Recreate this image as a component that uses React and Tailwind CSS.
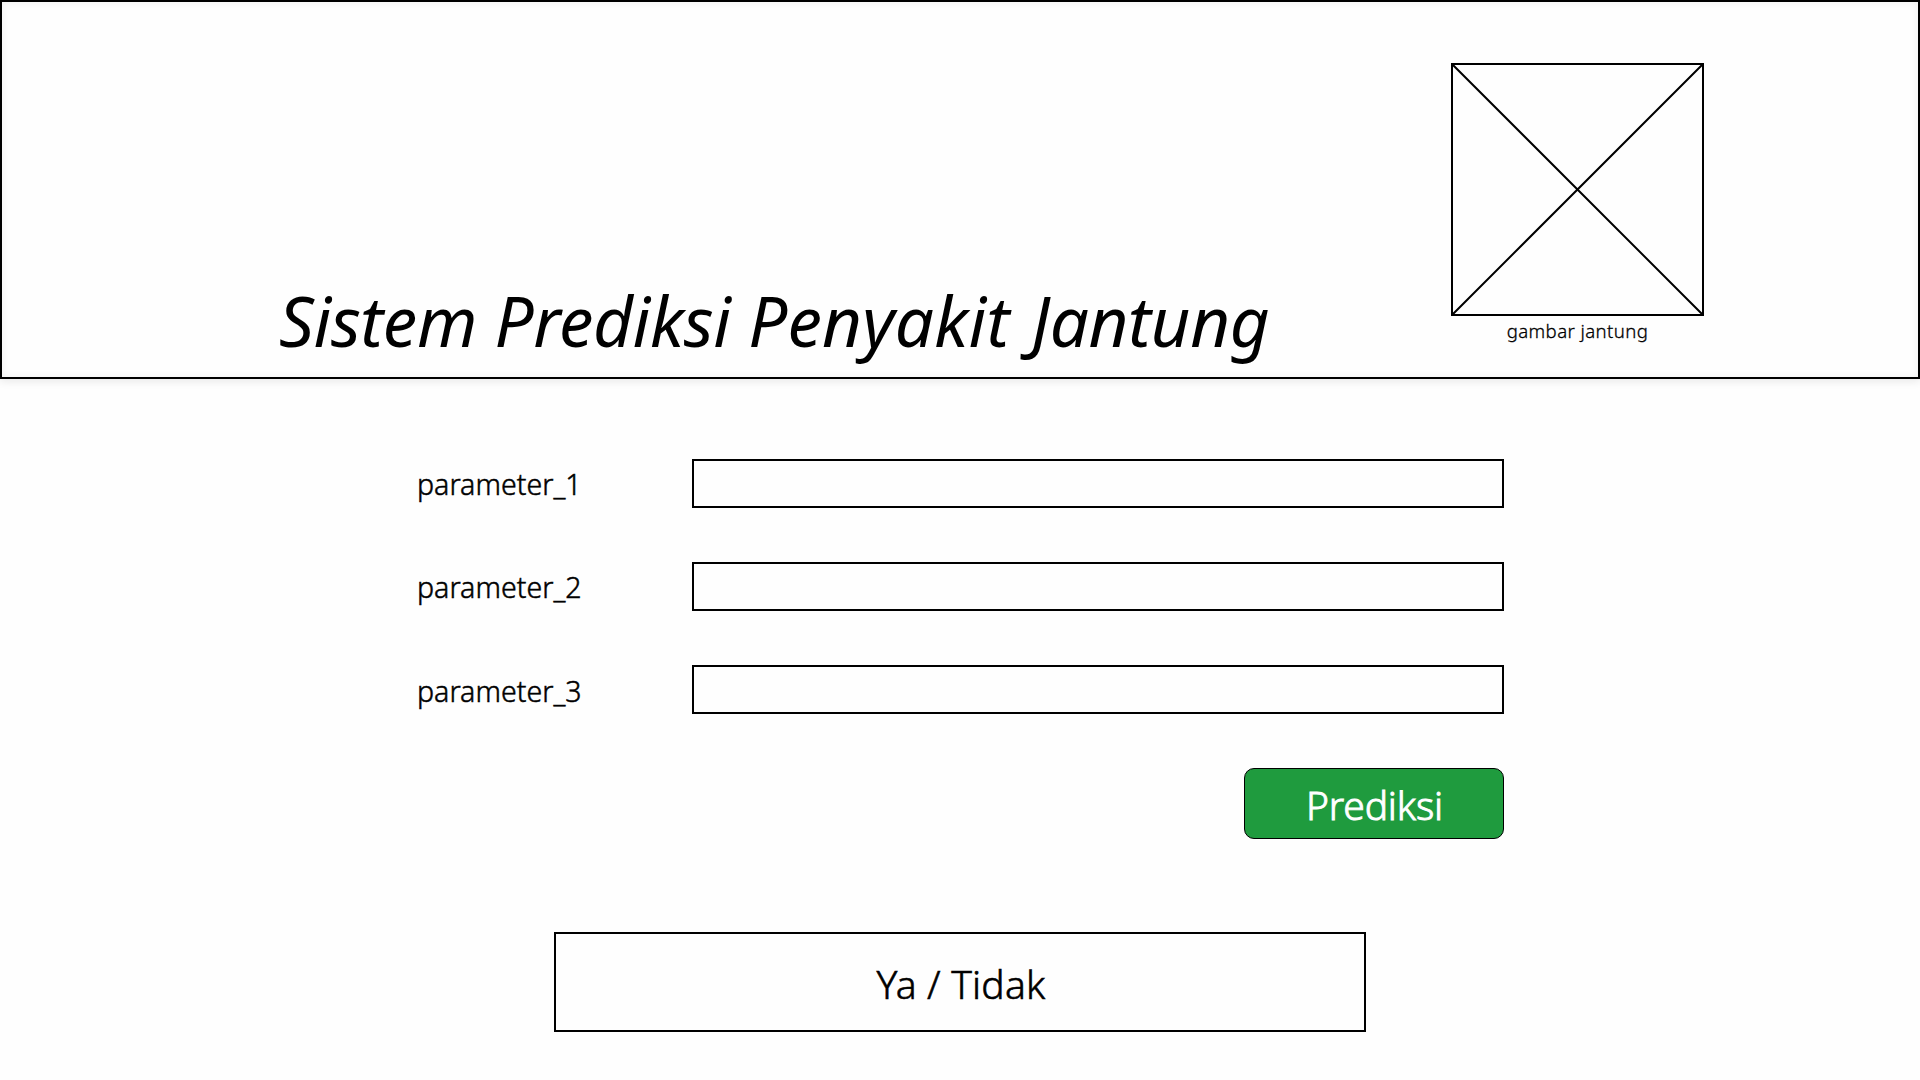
import React from "react";

const PARAMETERS = ["parameter_1", "parameter_2", "parameter_3"];

function ImagePlaceholder() {
  return (
    <figure className="flex w-[253px] flex-col items-center">
      <svg className="block size-[253px]" viewBox="0 0 253 253" fill="none" stroke="#000" strokeWidth="2">
        <rect x="1" y="1" width="251" height="251" />
        <path d="M0.5 0.5L252 252M252 1L1 252" />
      </svg>
      <figcaption className="mt-[2px] whitespace-nowrap text-[18.6px] font-light leading-[26px] tracking-[0.4px] [-webkit-text-stroke:0.3px_black]">
        gambar jantung
      </figcaption>
    </figure>
  );
}

function Header() {
  return (
    <header className="flex h-[379px] justify-between border-2 border-black pl-[277px] pr-[214px] shadow-[0_3px_8px_rgba(0,0,0,0.08),inset_0_0_8px_rgba(0,0,0,0.06)]">
      <h1 className="mt-[270px] whitespace-nowrap text-[69px] italic leading-[96px] tracking-[-0.38px]">
        Sistem Prediksi <span className="tracking-[0.22px]">Penyakit</span> <span className="pl-[4px]">Jantung</span>
      </h1>
      <div className="pt-[61px]">
        <ImagePlaceholder />
      </div>
    </header>
  );
}

export default function App() {
  return (
    <div className="h-[1080px] w-[1920px] overflow-hidden bg-[#fefefe] font-['Noto_Sans',sans-serif] text-black">
      <Header />
      <main>
        <form className="ml-[417px] mt-20 flex w-[1087px] flex-col" onSubmit={(e) => e.preventDefault()}>
          <div className="flex flex-col gap-[54px]">
            {PARAMETERS.map((name) => (
              <label key={name} className="group flex h-[49px] items-center justify-between">
                <span className="text-[28.5px] font-light leading-[40px] tracking-[0.03px] [-webkit-text-stroke:0.5px_black] group-last:pt-[2px]">
                  {name}
                </span>
                <input name={name} className="h-[49px] w-[812px] border-2 border-black bg-[#fefefe] px-3 text-2xl outline-none" />
              </label>
            ))}
          </div>
          <button className="mt-[54px] flex h-[71px] w-[260px] items-center justify-center self-end rounded-[10px] border border-black bg-[#1f9b3e] pl-px pt-[3px] text-[39px] font-light leading-[54px] tracking-[-0.15px] text-white [-webkit-text-stroke:0.9px_white]">
            Prediksi
          </button>
        </form>
        <output className="mx-auto mt-[93px] flex h-[100px] w-[812px] items-center justify-center border-2 border-black pl-[2px] pt-1 text-[39px] font-light leading-[54px] tracking-[0.2px] [-webkit-text-stroke:0.6px_black]">
          Ya / Tidak
        </output>
      </main>
    </div>
  );
}
